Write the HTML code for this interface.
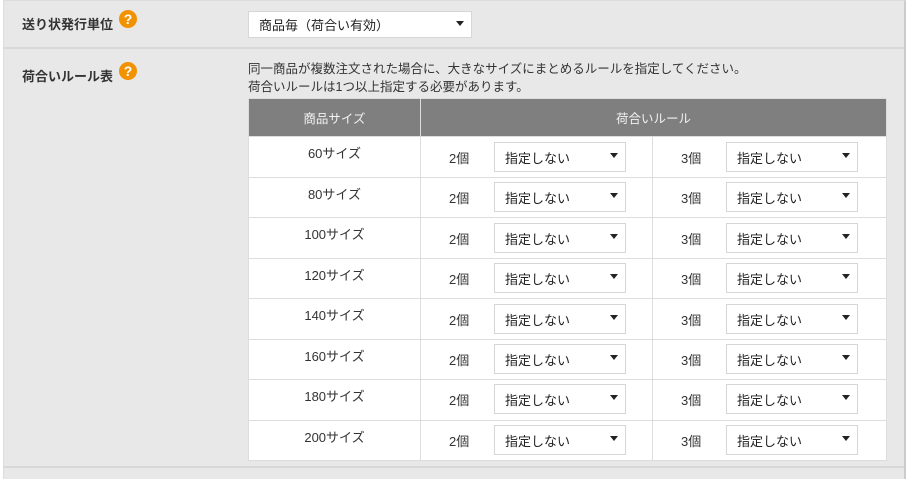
<!DOCTYPE html>
<html><head><meta charset="utf-8"><style>
*{box-sizing:border-box;margin:0;padding:0}
body{width:917px;height:479px;background:#fff;font-family:"Liberation Sans","Noto Sans CJK JP",sans-serif;font-size:13px;color:#333;position:relative;overflow:hidden}
.panel{position:absolute;left:3px;top:0;width:903px;height:479px;background:#e8e8e8;border-left:1px solid #ddd;border-right:2px solid #ccc;border-top:1px solid #ddd}
.sep{position:absolute;left:3px;width:901px;height:2px;background:#d8d8d8}
.lbl{position:absolute;left:22px;font-weight:bold;font-size:13px;color:#333}
.q{display:inline-block;width:18px;height:18px;border-radius:50%;background:#f39200;color:#fff;font-size:14px;font-weight:bold;text-align:center;line-height:18px;vertical-align:top;margin-left:6px;margin-top:-4px}
.sel{position:absolute;background:#fff;border:1px solid #d6d6d6;font-size:13px;color:#222;padding-left:10px}
.sel:after{content:"";position:absolute;right:7px;top:50%;margin-top:-4px;border-left:4px solid transparent;border-right:4px solid transparent;border-top:5px solid #222}
.desc{position:absolute;left:248px;top:60px;font-size:12.5px;line-height:18px;color:#333}
table{position:absolute;left:248px;top:98px;border-collapse:collapse;background:#fff}
th{background:#7f7f7f;color:#f2f2f2;font-weight:normal;height:38px;font-size:12.5px;border:1px solid #ddd}
td{height:40.5px;border:1px solid #ddd;position:relative;font-size:13px}
td.s{text-align:center;vertical-align:top;padding-top:6px}
</style></head><body>
<div class="panel"></div>
<div class="sep" style="top:47px"></div>
<div class="sep" style="top:466px"></div>
<div class="lbl" style="top:14px">送り状発行単位<span class="q">?</span></div>
<div class="sel" style="left:248px;top:11px;width:224px;height:27px;line-height:27px">商品毎（荷合い有効）</div>
<div class="lbl" style="top:66px">荷合いルール表<span class="q">?</span></div>
<div class="desc">同一商品が複数注文された場合に、大きなサイズにまとめるルールを指定してください。<br>荷合いルールは1つ以上指定する必要があります。</div>
<table>
<tr><th style="width:172px">商品サイズ</th><th colspan="2" style="width:466px">荷合いルール</th></tr>
<tr><td class="s">60サイズ</td><td style="width:232px"></td><td style="width:234px"></td></tr>
<tr><td class="s">80サイズ</td><td></td><td></td></tr>
<tr><td class="s">100サイズ</td><td></td><td></td></tr>
<tr><td class="s">120サイズ</td><td></td><td></td></tr>
<tr><td class="s">140サイズ</td><td></td><td></td></tr>
<tr><td class="s">160サイズ</td><td></td><td></td></tr>
<tr><td class="s">180サイズ</td><td></td><td></td></tr>
<tr><td class="s">200サイズ</td><td></td><td></td></tr>
</table>
<div id="c"></div>
<script>
var h='';for(var i=0;i<8;i++){var y=136+i*40.4;
h+='<div style="position:absolute;left:449px;top:'+(y+12)+'px;font-size:13px">2個</div>';
h+='<div class="sel" style="left:494px;top:'+(y+6)+'px;width:132px;height:30px;line-height:32px">指定しない</div>';
h+='<div style="position:absolute;left:681px;top:'+(y+12)+'px;font-size:13px">3個</div>';
h+='<div class="sel" style="left:726px;top:'+(y+6)+'px;width:132px;height:30px;line-height:32px">指定しない</div>';}
document.getElementById('c').innerHTML=h;
</script>
</body></html>
